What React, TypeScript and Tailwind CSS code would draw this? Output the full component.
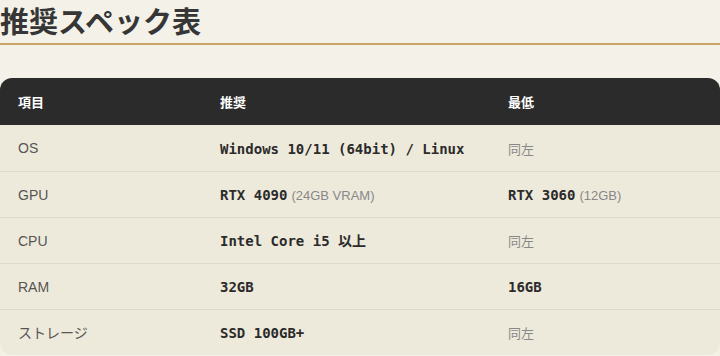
const rows = [
  { label: "OS", rec: "Windows 10/11 (64bit) / Linux", min: null, minNote: "同左" },
  { label: "GPU", rec: "RTX 4090", recNote: "(24GB VRAM)", min: "RTX 3060", minNote: "(12GB)" },
  { label: "CPU", rec: "Intel Core i5 以上", min: null, minNote: "同左" },
  { label: "RAM", rec: "32GB", min: "16GB" },
  { label: "ストレージ", rec: "SSD 100GB+", min: null, minNote: "同左" },
];

const sans = "font-['Liberation_Sans','Noto_Sans_CJK_JP',sans-serif]";
const mono = "font-['DejaVu_Sans_Mono','Noto_Sans_CJK_JP',monospace]";

export default function App() {
  return (
    <div className={`min-h-screen bg-[#f4f1e8] ${sans}`}>
      <h1 className="border-b-2 border-[#c9a468] pt-[2px] pb-[5px] text-[29px] font-bold leading-[36px] text-[#363636] font-['Noto_Sans_CJK_JP',sans-serif]">
        推奨スペック表
      </h1>
      <table className="mt-[33px] w-[720px] table-fixed border-collapse overflow-hidden rounded-xl bg-[#eeeadb]">
        <colgroup>
          <col className="w-[202px]" />
          <col className="w-[288px]" />
          <col className="w-[230px]" />
        </colgroup>
        <thead>
          <tr className="h-[47px] bg-[#2b2b2b] text-left text-[13px] font-bold text-white font-['Noto_Sans_CJK_JP',sans-serif]">
            <th className="pl-[18px] font-bold">項目</th>
            <th className="pl-[18px] font-bold">推奨</th>
            <th className="pl-[18px] font-bold">最低</th>
          </tr>
        </thead>
        <tbody>
          {rows.map((r, i) => (
            <tr
              key={r.label}
              className={`h-[46px] ${i < rows.length - 1 ? "border-b border-[#e0dbc9]" : ""}`}
            >
              <td className="pl-[18px] pt-[2px] text-[14px] text-[#555]">{r.label}</td>
              <td className="pl-[18px] pt-[2px]">
                <span className={`${mono} text-[14px] font-bold text-[#2b2b2b]`}>{r.rec}</span>
                {r.recNote && <span className="ml-1 text-[13px] text-[#888]">{r.recNote}</span>}
              </td>
              <td className="pl-[18px] pt-[2px]">
                {r.min && <span className={`${mono} text-[14px] font-bold text-[#2b2b2b]`}>{r.min}</span>}
                {r.minNote && (
                  <span className={`${r.min ? "ml-1" : ""} text-[13px] text-[#888]`}>{r.minNote}</span>
                )}
              </td>
            </tr>
          ))}
        </tbody>
      </table>
    </div>
  );
}
